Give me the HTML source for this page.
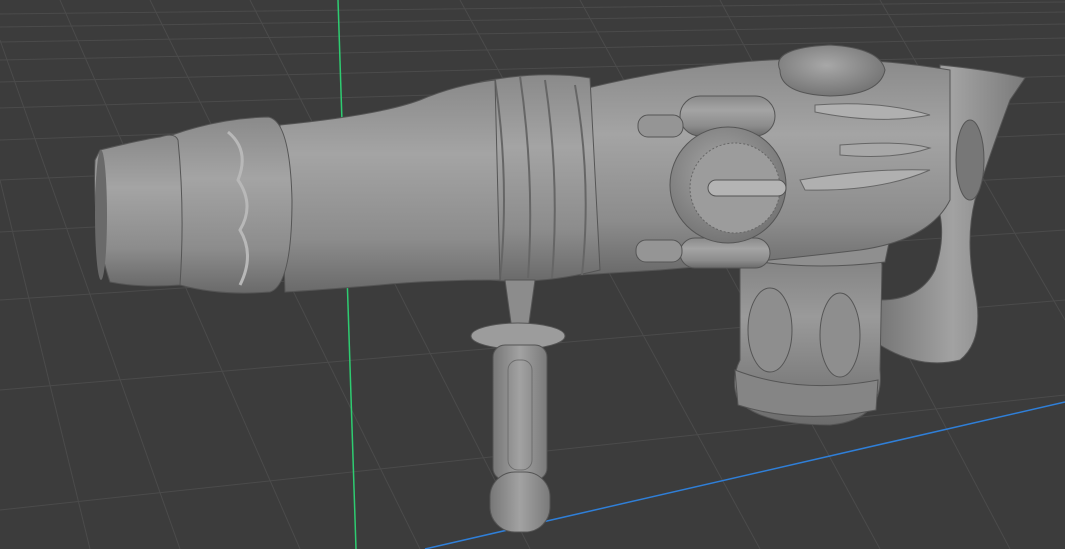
<!DOCTYPE html>
<html><head><style>html,body{margin:0;padding:0;background:#3c3c3c;overflow:hidden}svg{display:block}</style></head>
<body>
<svg width="1065" height="549" viewBox="0 0 1065 549" xmlns="http://www.w3.org/2000/svg">
<defs>
<linearGradient id="vg" x1="0" y1="0" x2="0" y2="1">
<stop offset="0" stop-color="#8a8a8a"/><stop offset="0.35" stop-color="#a4a4a4"/><stop offset="0.75" stop-color="#8c8c8c"/><stop offset="1" stop-color="#6a6a6a"/></linearGradient>
<linearGradient id="vg2" x1="0" y1="0" x2="0" y2="1">
<stop offset="0" stop-color="#7e7e7e"/><stop offset="0.4" stop-color="#9a9a9a"/><stop offset="1" stop-color="#6c6c6c"/></linearGradient>
<linearGradient id="hg" x1="0" y1="0" x2="1" y2="0">
<stop offset="0" stop-color="#777"/><stop offset="0.5" stop-color="#a2a2a2"/><stop offset="1" stop-color="#7a7a7a"/></linearGradient>
<radialGradient id="rg" cx="0.45" cy="0.4" r="0.6"><stop offset="0" stop-color="#a8a8a8"/><stop offset="1" stop-color="#757575"/></radialGradient>
</defs>
<rect width="1065" height="549" fill="#3c3c3c"/>
<g stroke="#4b4b4b" stroke-width="1" fill="none">
<path d="M0 14 L1065 2"/><path d="M0 27 L1065 12"/><path d="M0 42 L1065 24"/><path d="M0 60 L1065 38"/>
<path d="M0 82 L1065 55"/><path d="M0 108 L1065 76"/><path d="M0 140 L1065 102"/><path d="M0 180 L1065 134"/>
<path d="M0 232 L1065 176"/><path d="M0 300 L1065 230"/><path d="M0 390 L1065 300"/><path d="M0 510 L1065 395"/>
<path d="M60 0 L300 549"/><path d="M150 0 L420 549"/><path d="M250 0 L530 549"/><path d="M460 0 L760 549"/>
<path d="M580 0 L880 549"/><path d="M720 0 L1010 549"/><path d="M880 0 L1065 320"/><path d="M0 40 L180 549"/><path d="M0 180 L90 549"/>
</g>
<path d="M338 0 L356 549" stroke="#2ecc71" stroke-width="1.5"/>
<path d="M425 549 L1065 402" stroke="#2f7fd8" stroke-width="1.5"/>
<!-- rear grip -->
<path d="M940 65 Q990 70 1025 78 L1010 100 Q995 140 975 200 Q965 240 975 290 Q985 340 960 360 Q920 370 880 345 L880 300 Q920 300 935 270 Q945 240 940 215 Z" fill="url(#hg)" stroke="#555"/>
<!-- magazine -->
<path d="M740 270 Q740 250 800 245 Q880 245 882 265 L880 370 Q885 420 830 425 Q760 425 738 400 Q730 380 740 360 Z" fill="url(#vg2)" stroke="#555"/>
<ellipse cx="770" cy="330" rx="22" ry="42" fill="#8e8e8e" stroke="#555"/>
<ellipse cx="840" cy="335" rx="20" ry="42" fill="#8e8e8e" stroke="#555"/>
<path d="M735 370 Q800 395 878 380 L876 410 Q800 425 738 405 Z" fill="#858585" stroke="#555"/>
<path d="M770 240 Q830 220 890 238 L885 262 Q820 270 760 262 Z" fill="#8f8f8f" stroke="#555"/>
<!-- main body -->
<path d="M580 90 Q680 65 770 60 Q860 55 950 70 L950 200 Q930 240 860 250 Q760 262 660 270 L580 275 Z" fill="url(#vg)" stroke="#555"/>
<path d="M780 70 Q770 48 830 45 Q880 48 885 70 Q880 95 830 96 Q780 94 780 70 Z" fill="url(#rg)" stroke="#555"/>
<path d="M815 105 Q880 100 930 115 Q880 125 815 112 Z" fill="#b0b0b0" stroke="#666"/>
<path d="M800 180 Q870 168 930 170 Q880 192 805 190 Z" fill="#b0b0b0" stroke="#666"/>
<path d="M840 145 Q900 140 930 148 Q895 160 840 155 Z" fill="#a8a8a8" stroke="#666"/>
<ellipse cx="970" cy="160" rx="14" ry="40" fill="#777" stroke="#555"/>
<!-- top small capsule -->
<rect x="680" y="96" width="95" height="40" rx="20" fill="url(#vg)" stroke="#555"/>
<rect x="638" y="115" width="45" height="22" rx="10" fill="#959595" stroke="#555"/>
<rect x="680" y="238" width="90" height="30" rx="15" fill="url(#vg)" stroke="#555"/>
<rect x="636" y="240" width="46" height="22" rx="10" fill="#959595" stroke="#555"/>
<!-- dial -->
<circle cx="728" cy="185" r="58" fill="url(#rg)" stroke="#555"/>
<circle cx="735" cy="188" r="45" fill="#9c9c9c" stroke="#666" stroke-dasharray="2 2"/>
<rect x="708" y="180" width="78" height="16" rx="8" fill="#b4b4b4" stroke="#555"/>
<!-- rings -->
<path d="M480 82 Q540 70 590 78 L600 270 Q540 285 490 280 Z" fill="url(#vg)" stroke="#555"/>
<path d="M520 76 Q535 180 528 278" stroke="#666" fill="none" stroke-width="2"/>
<path d="M545 80 Q560 180 552 278" stroke="#666" fill="none" stroke-width="2"/>
<path d="M575 85 Q592 180 582 275" stroke="#666" fill="none" stroke-width="2"/>
<path d="M495 80 Q510 180 500 280" stroke="#666" fill="none" stroke-width="2"/>
<!-- barrel -->
<path d="M280 125 Q380 115 420 100 Q455 85 495 80 L500 280 Q430 280 380 285 Q320 290 285 292 Z" fill="url(#vg)" stroke="#555"/>
<!-- ring section -->
<path d="M172 135 Q220 118 268 117 Q290 120 292 200 Q292 285 270 292 Q220 296 180 285 Z" fill="url(#vg)" stroke="#555"/>
<path d="M228 132 Q250 150 238 180 Q255 205 240 230 Q255 255 240 285" stroke="#b8b8b8" fill="none" stroke-width="3"/>
<!-- muzzle -->
<path d="M100 150 Q140 140 160 137 Q175 132 178 140 Q185 210 180 285 Q140 288 110 282 Q92 230 95 160 Z" fill="url(#vg)" stroke="#555"/>
<ellipse cx="101" cy="215" rx="6" ry="65" fill="#6a6a6a"/>
<!-- front handle -->
<path d="M505 280 L535 280 L528 330 L512 330 Z" fill="#8c8c8c" stroke="#555"/>
<ellipse cx="518" cy="336" rx="47" ry="13" fill="#9c9c9c" stroke="#555"/>
<rect x="493" y="345" width="54" height="135" rx="12" fill="url(#hg)" stroke="#555"/>
<rect x="508" y="360" width="24" height="110" rx="10" fill="none" stroke="#6e6e6e"/>
<rect x="490" y="472" width="60" height="60" rx="25" fill="url(#hg)" stroke="#555"/>
</svg>
</body></html>
